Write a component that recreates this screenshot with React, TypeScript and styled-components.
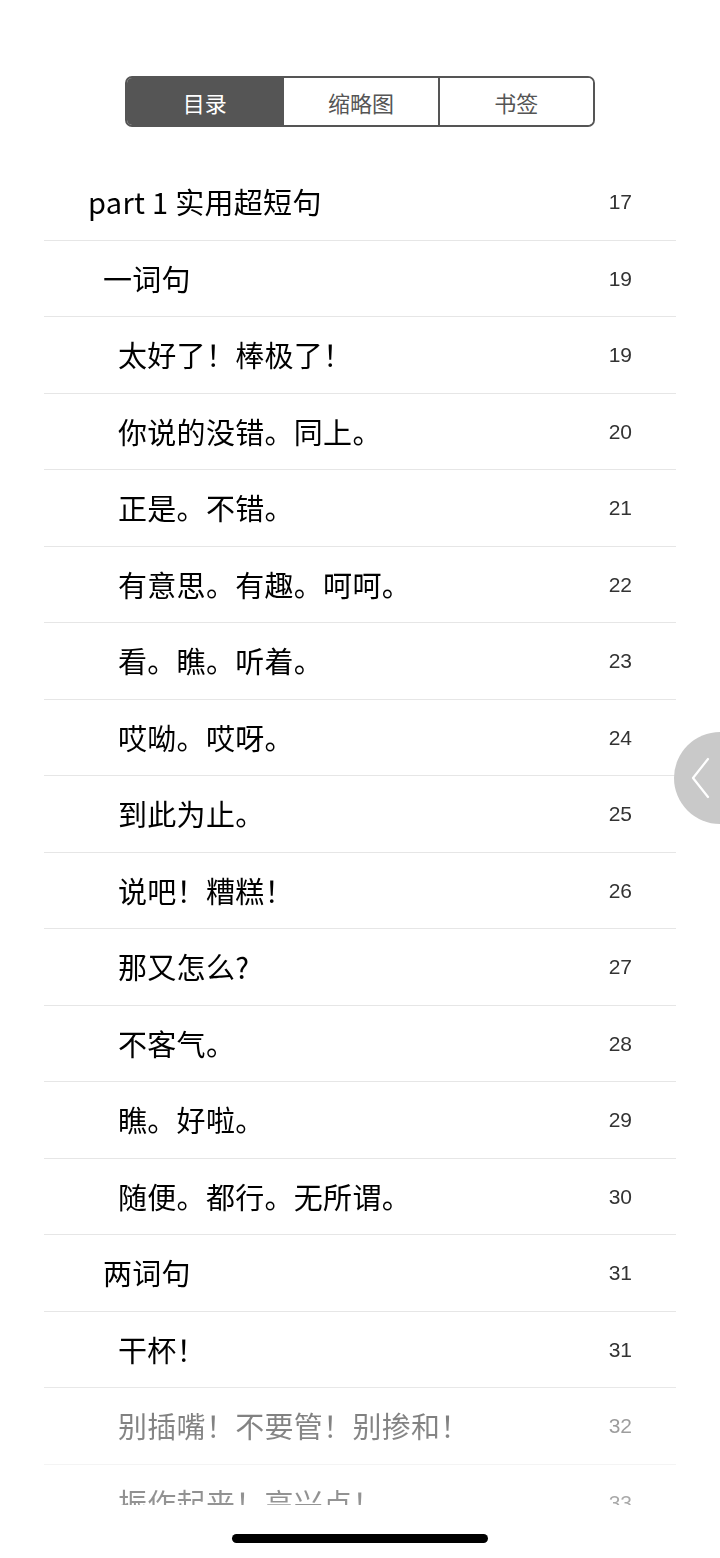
import React from "react";
import styled, { createGlobalStyle } from "styled-components";

const Global = createGlobalStyle`
  html, body { margin: 0; padding: 0; background: #fff; }
  body { font-family: "Noto Sans CJK SC", "Noto Sans", sans-serif; }
  * { box-sizing: border-box; }
`;

const Page = styled.div`
  position: relative;
  width: 720px;
  height: 1558px;
  overflow: hidden;
  background: #fff;
  display: flex;
  flex-direction: column;
  align-items: center;
`;

const Segmented = styled.div`
  margin-top: 76px;
  width: 470px;
  height: 51px;
  display: grid;
  grid-template-columns: 1fr 1fr 1fr;
  border: 2px solid #555;
  border-radius: 7px;
  overflow: hidden;
`;

const Segment = styled.div<{ $active?: boolean }>`
  display: flex;
  align-items: center;
  justify-content: center;
  font-size: 22px;
  color: ${(p) => (p.$active ? "#fff" : "#555")};
  background: ${(p) => (p.$active ? "#555" : "#fff")};
  & + & { border-left: 2px solid #555; }
`;

const List = styled.div`
  margin-top: 37px;
  width: 632px;
  height: 1341px;
  overflow: hidden;
  -webkit-mask-image: linear-gradient(to bottom, #000 calc(100% - 122px), rgba(0,0,0,0.5) calc(100% - 98px), rgba(0,0,0,0.42) 100%);
  mask-image: linear-gradient(to bottom, #000 calc(100% - 122px), rgba(0,0,0,0.5) calc(100% - 98px), rgba(0,0,0,0.42) 100%);
`;

const Row = styled.div<{ $level: number }>`
  height: 76.5px;
  display: flex;
  align-items: center;
  justify-content: space-between;
  padding: 0 44px 0 ${(p) => 44 + p.$level * 15}px;
  border-bottom: 1px solid #e6e6e6;
`;

const Title = styled.span`
  font-size: 29px;
  letter-spacing: 0.3px;
  color: #000;
  white-space: nowrap;
  line-height: 1;
`;

const PageNum = styled.span`
  font-family: "Liberation Sans", Arial, sans-serif;
  font-size: 21px;
  color: #333;
  line-height: 1;
`;

const Handle = styled.div`
  position: absolute;
  left: 674px;
  top: 732px;
  width: 92px;
  height: 92px;
  border-radius: 50%;
  background: #c9c9c9;
  display: flex;
  align-items: center;
  padding-left: 16px;
`;

const HomeBar = styled.div`
  position: absolute;
  left: 232px;
  top: 1534px;
  width: 256px;
  height: 9px;
  border-radius: 5px;
  background: #000;
`;

const items: [number, string, string][] = [
  [0, "part 1 实用超短句", "17"],
  [1, "一词句", "19"],
  [2, "太好了！棒极了！", "19"],
  [2, "你说的没错。同上。", "20"],
  [2, "正是。不错。", "21"],
  [2, "有意思。有趣。呵呵。", "22"],
  [2, "看。瞧。听着。", "23"],
  [2, "哎呦。哎呀。", "24"],
  [2, "到此为止。", "25"],
  [2, "说吧！糟糕！", "26"],
  [2, "那又怎么?", "27"],
  [2, "不客气。", "28"],
  [2, "瞧。好啦。", "29"],
  [2, "随便。都行。无所谓。", "30"],
  [1, "两词句", "31"],
  [2, "干杯！", "31"],
  [2, "别插嘴！不要管！别掺和！", "32"],
  [2, "振作起来！高兴点！", "33"],
];

export default function App() {
  return (
    <>
      <Global />
      <Page>
        <Segmented>
          <Segment $active>目录</Segment>
          <Segment>缩略图</Segment>
          <Segment>书签</Segment>
        </Segmented>
        <List>
          {items.map(([lvl, t, n], i) => (
            <Row key={i} $level={lvl}>
              <Title>{t}</Title>
              <PageNum>{n}</PageNum>
            </Row>
          ))}
        </List>
        <Handle>
          <svg width="22" height="44" viewBox="0 0 22 44">
            <polyline points="18,3 3,22 18,41" fill="none" stroke="#fff" strokeWidth="2.2" strokeLinecap="round" strokeLinejoin="round" />
          </svg>
        </Handle>
        <HomeBar />
      </Page>
    </>
  );
}
